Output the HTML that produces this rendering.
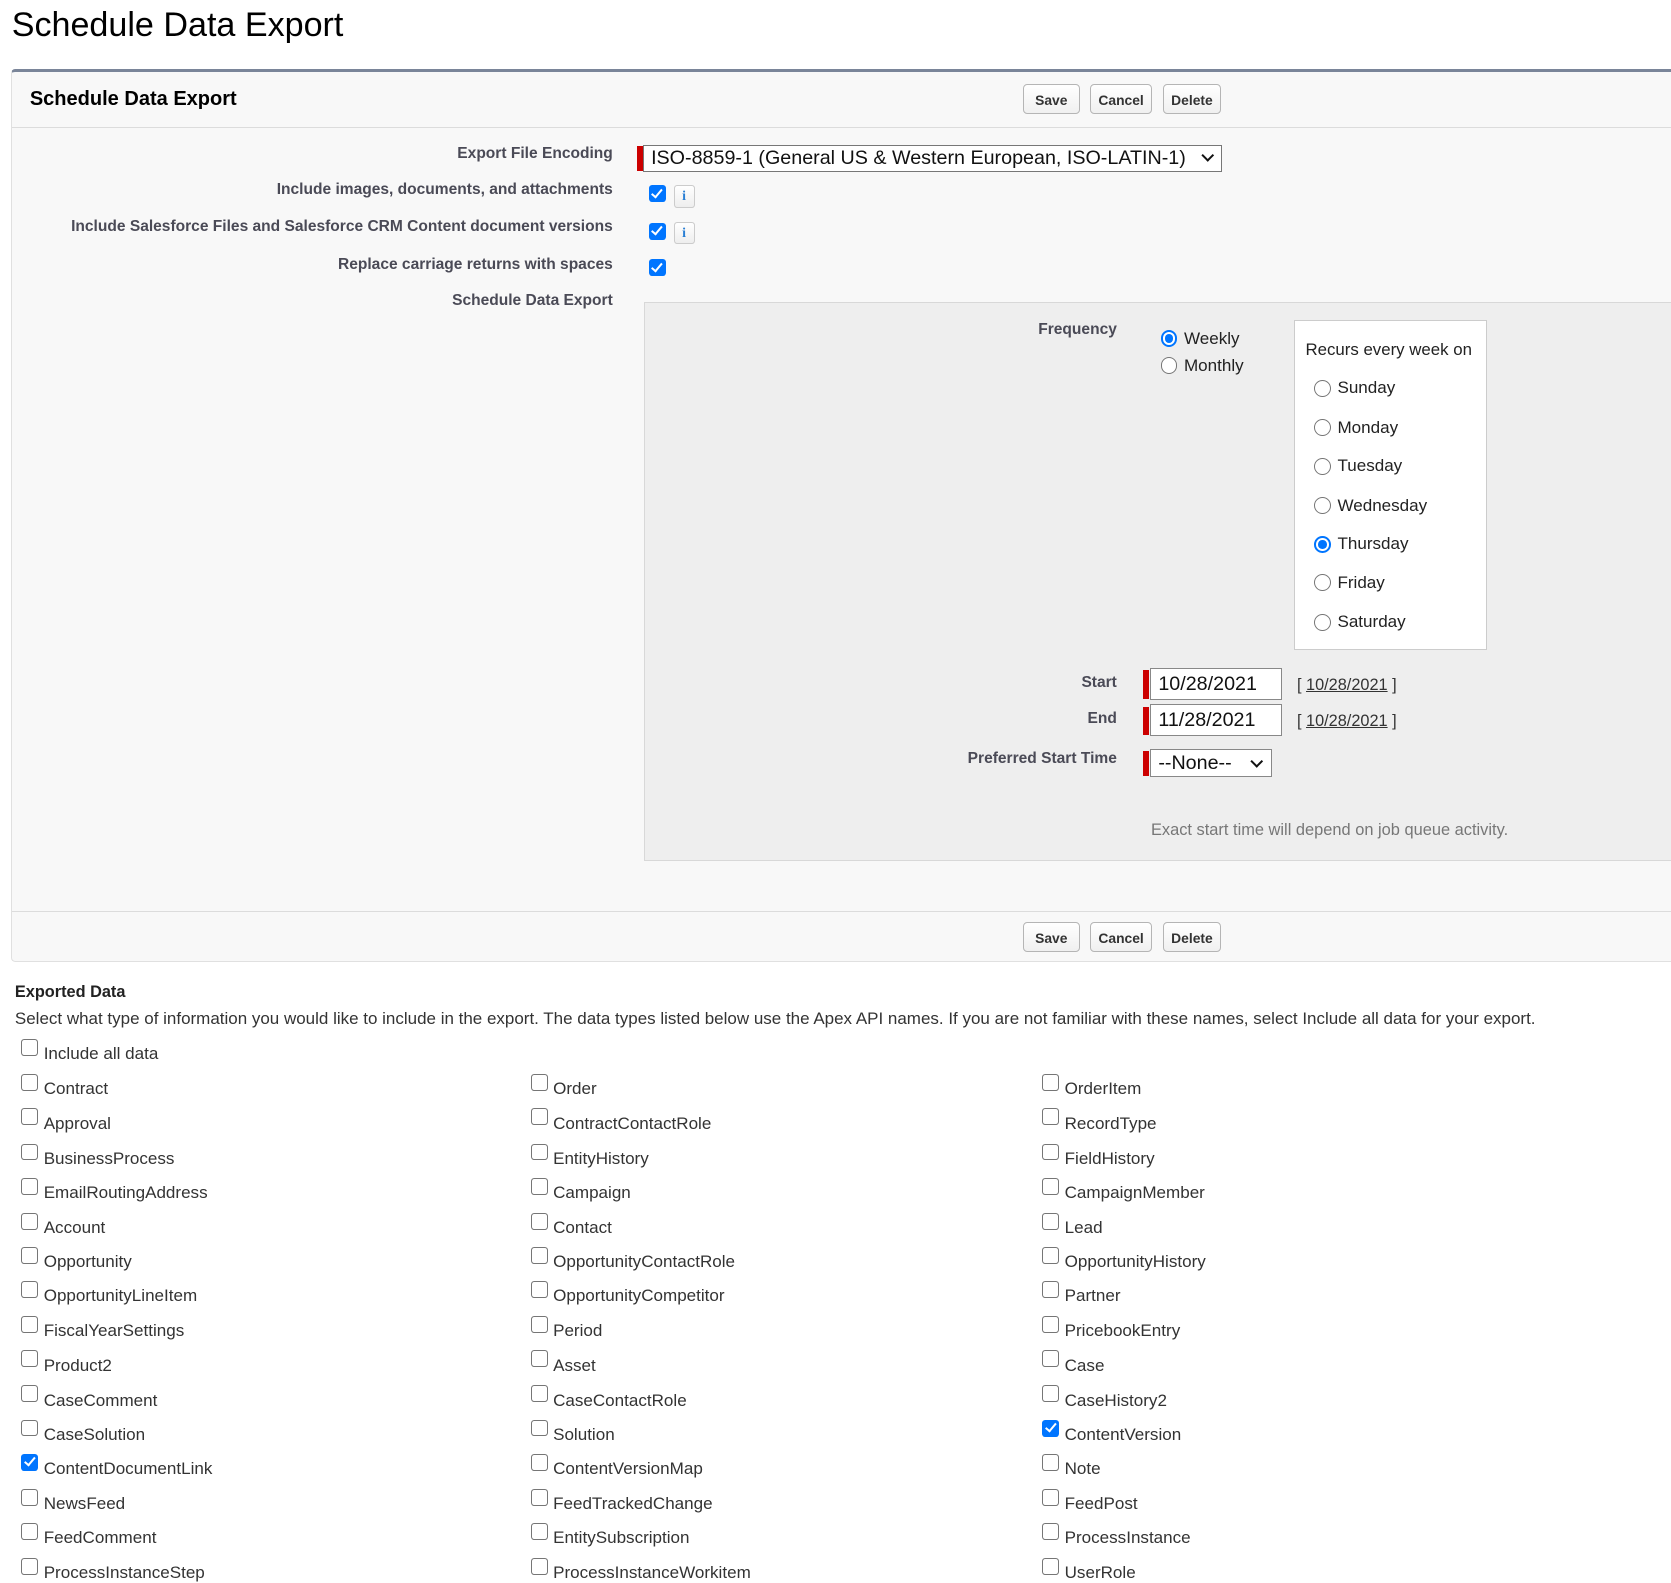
<!DOCTYPE html>
<html><head><meta charset="utf-8">
<style>
html,body{margin:0;padding:0;background:#fff;overflow:hidden;}
body{width:1671px;height:1583px;}
#w{zoom:1.0657;position:relative;width:1568px;height:1486px;font-family:"Liberation Sans",Arial,sans-serif;color:#222;}
.a{position:absolute;white-space:nowrap;}
.btn{position:absolute;top:0;height:28px;border:1px solid #b5b5b5;border-radius:4px;background:linear-gradient(#fff,#f0f0f0);font-weight:bold;font-size:13px;line-height:29px;text-align:center;color:#333;box-sizing:border-box;}
.lbl{position:absolute;right:993px;font-weight:bold;font-size:14.6px;color:#4a4a56;text-align:right;white-space:nowrap;}
.cb{position:absolute;width:16px;height:16px;border-radius:3px;background:#0075ff;}
.cb:after{content:"";position:absolute;left:5px;top:1.5px;width:4px;height:8px;border:solid #fff;border-width:0 2.5px 2.5px 0;transform:rotate(40deg);}
.info{position:absolute;width:18px;height:19px;border:1px solid #ccc;border-radius:3px;background:linear-gradient(#fff,#eee);font-family:"Liberation Serif",serif;font-weight:bold;color:#2a7fd4;font-size:13px;text-align:center;line-height:19px;}
.red{position:absolute;width:5px;background:#c00;}
.box{position:absolute;background:#fff;border:1px solid #888;box-sizing:border-box;font-size:18.5px;color:#111;padding-left:7px;}
.rd{position:absolute;width:14px;height:14px;border:1px solid #767676;border-radius:50%;background:#fff;}
.rd.on{border:2px solid #0075ff;width:12px;height:12px;}
.rd.on:after{content:"";position:absolute;left:2px;top:2px;width:8px;height:8px;border-radius:50%;background:#0075ff;}
.t16{position:absolute;font-size:16px;color:#222;white-space:nowrap;}
.it{position:absolute;height:20px;line-height:20px;font-size:16px;padding-left:21px;white-space:nowrap;color:#333;}
.it i{position:absolute;left:0;top:-4px;width:14px;height:14px;border:1px solid #767676;border-radius:3px;background:#fff;}
.it b{position:absolute;left:0;top:-4px;width:16px;height:16px;border-radius:3px;background:#0075ff;}
.it b:after{content:"";position:absolute;left:5px;top:1.5px;width:4px;height:8px;border:solid #fff;border-width:0 2.5px 2.5px 0;transform:rotate(40deg);}
.chev{position:absolute;width:7px;height:7px;border:solid #111;border-width:0 2px 2px 0;transform:rotate(45deg);}
</style></head><body><div id="w">
<div class="a" style="left:11px;top:6px;font-size:32px;color:#000;">Schedule Data Export</div>

<div class="a" style="left:10px;top:65px;width:1570px;height:838px;background:#f8f8f8;border:1px solid #e0e0e0;border-top:3px solid #7a8599;border-radius:4px 0 0 4px;box-sizing:border-box;"></div>
<div class="a" style="left:28px;top:83px;font-size:18.8px;font-weight:bold;color:#000;">Schedule Data Export</div>
<div class="a" style="left:960px;top:79px;height:30px;">
 <div class="btn" style="left:0;width:53px;">Save</div>
 <div class="btn" style="left:63px;width:58px;">Cancel</div>
 <div class="btn" style="left:131px;width:55px;">Delete</div>
</div>
<div class="a" style="left:11px;top:119px;width:1560px;height:1px;background:#dcdcdc;"></div>

<div class="lbl" style="top:136px;">Export File Encoding</div>
<div class="lbl" style="top:170px;">Include images, documents, and attachments</div>
<div class="lbl" style="top:205px;">Include Salesforce Files and Salesforce CRM Content document versions</div>
<div class="lbl" style="top:240px;">Replace carriage returns with spaces</div>
<div class="lbl" style="top:274px;">Schedule Data Export</div>

<div class="red" style="left:598px;top:137px;height:23px;"></div>
<div class="box" style="left:603px;top:136px;width:544px;height:25px;line-height:24px;border-color:#777;">ISO-8859-1 (General US &amp; Western European, ISO-LATIN-1)</div>
<div class="chev" style="left:1129px;top:142px;"></div>

<div class="cb" style="left:609px;top:174px;"></div><div class="info" style="left:632px;top:174px;">i</div>
<div class="cb" style="left:609px;top:209px;"></div><div class="info" style="left:632px;top:208px;">i</div>
<div class="cb" style="left:609px;top:243px;"></div>

<div class="a" style="left:604px;top:283px;width:970px;height:525px;background:#eee;border:1px solid #d8d8d8;box-sizing:border-box;"></div>
<div class="lbl" style="top:301px;right:520px;">Frequency</div>
<div class="rd on" style="left:1089px;top:310px;"></div><div class="t16" style="left:1111px;top:309px;">Weekly</div>
<div class="rd" style="left:1089px;top:335px;"></div><div class="t16" style="left:1111px;top:334px;">Monthly</div>

<div class="a" style="left:1214px;top:300px;width:181px;height:310px;background:#fff;border:1px solid #ccc;box-sizing:border-box;"></div>
<div class="t16" style="left:1225px;top:319px;font-size:15.8px;">Recurs every week on</div>
<div class="rd" style="left:1233px;top:357px;"></div><div class="t16" style="left:1255px;top:355px;">Sunday</div>
<div class="rd" style="left:1233px;top:393px;"></div><div class="t16" style="left:1255px;top:392px;">Monday</div>
<div class="rd" style="left:1233px;top:430px;"></div><div class="t16" style="left:1255px;top:428px;">Tuesday</div>
<div class="rd" style="left:1233px;top:466px;"></div><div class="t16" style="left:1255px;top:465px;">Wednesday</div>
<div class="rd on" style="left:1233px;top:503px;"></div><div class="t16" style="left:1255px;top:501px;">Thursday</div>
<div class="rd" style="left:1233px;top:539px;"></div><div class="t16" style="left:1255px;top:538px;">Friday</div>
<div class="rd" style="left:1233px;top:576px;"></div><div class="t16" style="left:1255px;top:574px;">Saturday</div>

<div class="lbl" style="top:632px;right:520px;">Start</div>
<div class="red" style="left:1073px;top:629px;height:27px;"></div>
<div class="box" style="left:1079px;top:627px;width:124px;height:30px;line-height:29px;">10/28/2021</div>
<div class="t16" style="left:1217px;top:634px;font-size:15.3px;color:#333;">[ <u>10/28/2021</u> ]</div>
<div class="lbl" style="top:666px;right:520px;">End</div>
<div class="red" style="left:1073px;top:663px;height:27px;"></div>
<div class="box" style="left:1079px;top:661px;width:124px;height:30px;line-height:29px;">11/28/2021</div>
<div class="t16" style="left:1217px;top:668px;font-size:15.3px;color:#333;">[ <u>10/28/2021</u> ]</div>
<div class="lbl" style="top:704px;right:520px;">Preferred Start Time</div>
<div class="red" style="left:1073px;top:705px;height:23px;"></div>
<div class="box" style="left:1079px;top:703px;width:115px;height:26px;line-height:26px;">--None--</div>
<div class="chev" style="left:1175px;top:710px;"></div>
<div class="t16" style="left:1080px;top:770px;font-size:15.4px;color:#777;">Exact start time will depend on job queue activity.</div>

<div class="a" style="left:11px;top:855px;width:1560px;height:1px;background:#dcdcdc;"></div>
<div class="a" style="left:960px;top:865px;height:30px;">
 <div class="btn" style="left:0;width:53px;">Save</div>
 <div class="btn" style="left:63px;width:58px;">Cancel</div>
 <div class="btn" style="left:131px;width:55px;">Delete</div>
</div>

<div class="a" style="left:14px;top:922px;font-size:15.3px;font-weight:bold;color:#222;">Exported Data</div>
<div class="a" style="left:14px;top:947px;font-size:15.95px;color:#333;">Select what type of information you would like to include in the export. The data types listed below use the Apex API names. If you are not familiar with these names, select Include all data for your export.</div>

<div class="it" style="left:20px;top:979px;"><i></i>Include all data</div>

<div class="it" style="left:20px;top:1012px;"><i></i>Contract</div>
<div class="it" style="left:20px;top:1044px;"><i></i>Approval</div>
<div class="it" style="left:20px;top:1077px;"><i></i>BusinessProcess</div>
<div class="it" style="left:20px;top:1109px;"><i></i>EmailRoutingAddress</div>
<div class="it" style="left:20px;top:1142px;"><i></i>Account</div>
<div class="it" style="left:20px;top:1174px;"><i></i>Opportunity</div>
<div class="it" style="left:20px;top:1206px;"><i></i>OpportunityLineItem</div>
<div class="it" style="left:20px;top:1239px;"><i></i>FiscalYearSettings</div>
<div class="it" style="left:20px;top:1271px;"><i></i>Product2</div>
<div class="it" style="left:20px;top:1304px;"><i></i>CaseComment</div>
<div class="it" style="left:20px;top:1336px;"><i></i>CaseSolution</div>
<div class="it" style="left:20px;top:1368px;"><b></b>ContentDocumentLink</div>
<div class="it" style="left:20px;top:1401px;"><i></i>NewsFeed</div>
<div class="it" style="left:20px;top:1433px;"><i></i>FeedComment</div>
<div class="it" style="left:20px;top:1466px;"><i></i>ProcessInstanceStep</div>

<div class="it" style="left:498px;top:1012px;"><i></i>Order</div>
<div class="it" style="left:498px;top:1044px;"><i></i>ContractContactRole</div>
<div class="it" style="left:498px;top:1077px;"><i></i>EntityHistory</div>
<div class="it" style="left:498px;top:1109px;"><i></i>Campaign</div>
<div class="it" style="left:498px;top:1142px;"><i></i>Contact</div>
<div class="it" style="left:498px;top:1174px;"><i></i>OpportunityContactRole</div>
<div class="it" style="left:498px;top:1206px;"><i></i>OpportunityCompetitor</div>
<div class="it" style="left:498px;top:1239px;"><i></i>Period</div>
<div class="it" style="left:498px;top:1271px;"><i></i>Asset</div>
<div class="it" style="left:498px;top:1304px;"><i></i>CaseContactRole</div>
<div class="it" style="left:498px;top:1336px;"><i></i>Solution</div>
<div class="it" style="left:498px;top:1368px;"><i></i>ContentVersionMap</div>
<div class="it" style="left:498px;top:1401px;"><i></i>FeedTrackedChange</div>
<div class="it" style="left:498px;top:1433px;"><i></i>EntitySubscription</div>
<div class="it" style="left:498px;top:1466px;"><i></i>ProcessInstanceWorkitem</div>

<div class="it" style="left:978px;top:1012px;"><i></i>OrderItem</div>
<div class="it" style="left:978px;top:1044px;"><i></i>RecordType</div>
<div class="it" style="left:978px;top:1077px;"><i></i>FieldHistory</div>
<div class="it" style="left:978px;top:1109px;"><i></i>CampaignMember</div>
<div class="it" style="left:978px;top:1142px;"><i></i>Lead</div>
<div class="it" style="left:978px;top:1174px;"><i></i>OpportunityHistory</div>
<div class="it" style="left:978px;top:1206px;"><i></i>Partner</div>
<div class="it" style="left:978px;top:1239px;"><i></i>PricebookEntry</div>
<div class="it" style="left:978px;top:1271px;"><i></i>Case</div>
<div class="it" style="left:978px;top:1304px;"><i></i>CaseHistory2</div>
<div class="it" style="left:978px;top:1336px;"><b></b>ContentVersion</div>
<div class="it" style="left:978px;top:1368px;"><i></i>Note</div>
<div class="it" style="left:978px;top:1401px;"><i></i>FeedPost</div>
<div class="it" style="left:978px;top:1433px;"><i></i>ProcessInstance</div>
<div class="it" style="left:978px;top:1466px;"><i></i>UserRole</div>
</div></body></html>
